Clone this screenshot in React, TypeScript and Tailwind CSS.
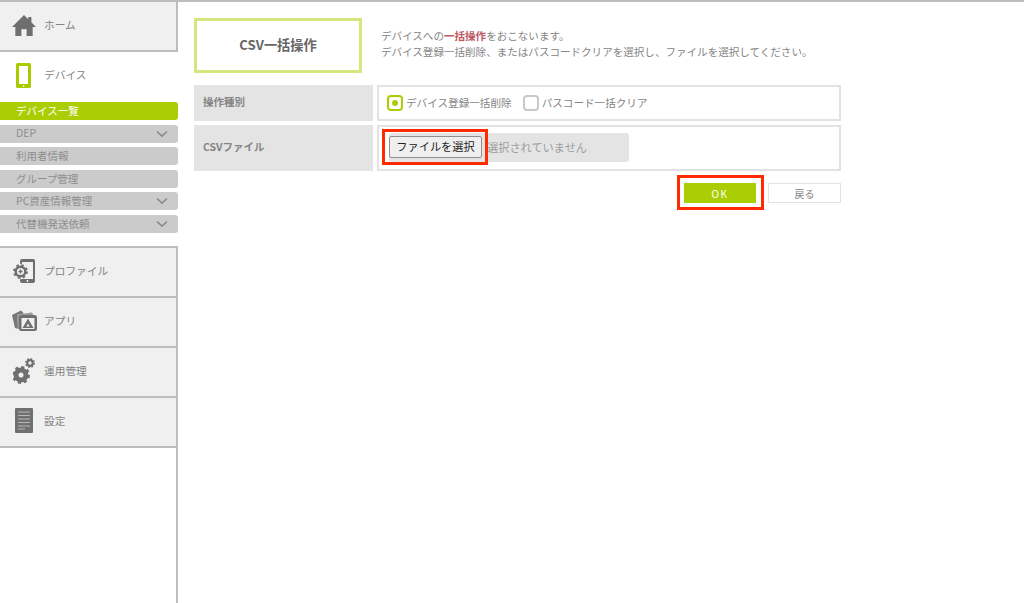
import React from 'react';

const font = { fontFamily: '"Noto Sans CJK JP", "Liberation Sans", sans-serif' };

function Chevron() {
  return (
    <svg width="12" height="7" viewBox="0 0 12 7" className="absolute right-[10px] top-1/2 -translate-y-1/2">
      <path d="M1 1l5 4.6L11 1" fill="none" stroke="#8a8a8a" strokeWidth="1.6" />
    </svg>
  );
}

function HomeIcon() {
  return (
    <svg width="24" height="21" viewBox="0 0 26 22" preserveAspectRatio="none">
      <path d="M13 0L0 12.5h3.6V22h6.6v-7h5.6v7h6.6v-9.5H26L21 7.7V2h-3.4v2.4z" fill="#6f6f6f" />
    </svg>
  );
}

function PhoneIcon() {
  return (
    <svg width="15" height="25" viewBox="0 0 15 25">
      <rect x="0" y="0" width="15" height="25" rx="1.5" fill="#a9cc00" />
      <rect x="3" y="3" width="9" height="18" fill="#fff" />
      <circle cx="7.5" cy="23" r="0.8" fill="#fff" />
    </svg>
  );
}

function ProfileIcon() {
  return (
    <svg width="22" height="24" viewBox="0 0 22 24">
      <rect x="7" y="0" width="15" height="24" rx="2" fill="#6f6f6f" />
      <rect x="9" y="3" width="11" height="17" fill="#f0f0f0" />
      <circle cx="14.500" cy="22" r="0.9" fill="#fff" />
      <circle cx="7.500" cy="12.500" r="7.800" fill="#f0f0f0" />
      <circle cx="7.500" cy="12.500" r="4.800" fill="none" stroke="#6f6f6f" strokeWidth="2.400" />
      <circle cx="7.500" cy="12.500" r="6.400" fill="none" stroke="#6f6f6f" strokeWidth="2" strokeDasharray="2.500 2.530" />
      <path d="M5.500 12.500h4M7.500 10.500v4" stroke="#6f6f6f" strokeWidth="1.300" />
    </svg>
  );
}

function AppIcon() {
  return (
    <svg width="25" height="21" viewBox="0 0 25 21">
      <path d="M0 5L9 0.500l3 3L5 5l1.500 14L3 18z" fill="#777" />
      <path d="M5 4.500L20 2.500l1.500 3H8L7 19l-1.500-1z" fill="#999" />
      <rect x="7" y="5" width="18" height="16" rx="2.500" fill="#6f6f6f" />
      <rect x="9.500" y="8" width="13" height="11" fill="#f0f0f0" />
      <path d="M16 8.500l5.500 9.500h-11z" fill="#6f6f6f" />
      <path d="M16 13.500l1.700 3h-3.400z" fill="#f0f0f0" />
    </svg>
  );
}

function GearsIcon() {
  return (
    <svg width="22" height="26" viewBox="0 0 22 26">
      <circle cx="8" cy="17" r="5" fill="none" stroke="#6f6f6f" strokeWidth="5" />
      <circle cx="8" cy="17" r="7.800" fill="none" stroke="#6f6f6f" strokeWidth="2.400" strokeDasharray="3.060 3.060" />
      <circle cx="17" cy="5" r="2.800" fill="none" stroke="#6f6f6f" strokeWidth="2.200" />
      <circle cx="17" cy="5" r="4.300" fill="none" stroke="#6f6f6f" strokeWidth="1.400" strokeDasharray="1.690 1.690" />
    </svg>
  );
}

function SettingsIcon() {
  return (
    <svg width="18" height="25" viewBox="0 0 18 25">
      <rect width="18" height="25" rx="1" fill="#6f6f6f" />
      <path d="M3 4h12M3 7.500h12M3 11h12M3 14.500h12M3 18h12M3 21h7" stroke="#b8b8b8" strokeWidth="1" />
    </svg>
  );
}

function NavTile({ icon, label }: { icon: React.ReactNode; label: string }) {
  return (
    <div className="flex items-center h-[50px] pb-[2px] bg-[#f0f0f0] border-b-2 border-r-2 border-[#bdbdbd]">
      <div className="w-[44px] flex justify-center pl-[4px]">{icon}</div>
      <span className="text-[10.700px] text-[#848484]">{label}</span>
    </div>
  );
}

function SubItem({ label, active, arrow }: { label: string; active?: boolean; arrow?: boolean }) {
  return (
    <div
      className={`relative h-[18px] flex items-center pl-[16px] rounded-r-[3px] text-[10.500px] leading-none ${
        active ? 'bg-[#abcd03] text-white' : 'bg-[#cbcbcb] text-[#8e8e8e]'
      }`}
    >
      {label}
      {arrow && <Chevron />}
    </div>
  );
}

export default function App() {
  return (
    <div style={font} className="flex h-[603px] w-[1024px] bg-white border-t-2 border-[#bdbdbd] overflow-hidden">
      <aside className="w-[178px] shrink-0 flex flex-col">
        <NavTile icon={<HomeIcon />} label="ホーム" />
        <div className="h-[50px] pb-[4px] flex items-center">
          <div className="w-[44px] flex justify-center pl-[3px]">
            <PhoneIcon />
          </div>
          <span className="text-[10.700px] text-[#848484]">デバイス</span>
        </div>
        <div className="flex flex-col gap-[4.600px]">
          <SubItem label="デバイス一覧" active />
          <SubItem label="DEP" arrow />
          <SubItem label="利用者情報" />
          <SubItem label="グループ管理" />
          <SubItem label="PC資産情報管理" arrow />
          <SubItem label="代替機発送依頼" arrow />
        </div>
        <div className="mt-[13px] flex-1 border-t-2 border-r-2 border-[#bdbdbd]">
          <div className="-mr-[2px]">
            <NavTile icon={<ProfileIcon />} label="プロファイル" />
            <NavTile icon={<AppIcon />} label="アプリ" />
            <NavTile icon={<GearsIcon />} label="運用管理" />
            <NavTile icon={<SettingsIcon />} label="設定" />
          </div>
        </div>
      </aside>

      <main className="w-[647px] ml-[16px] pt-[16px]">
        <div className="flex items-center h-[55px]">
          <div className="w-[168px] h-[55px] pb-[2px] border-[3px] border-[#d6e67f] flex items-center justify-center text-[13.200px] font-bold text-[#666]">
            CSV一括操作
          </div>
          <div className="ml-[19px] pb-[4px] text-[10.550px] leading-[16px] text-[#848484]">
            <p>
              デバイスへの<span className="text-[#bb5a62] font-bold">一括操作</span>をおこないます。
            </p>
            <p>デバイス登録一括削除、またはパスコードクリアを選択し、ファイルを選択してください。</p>
          </div>
        </div>

        <div className="mt-[12px] flex gap-[4px] h-[36px]">
          <div className="w-[179px] bg-[#e4e4e4] flex items-center pl-[9px] pb-[2px] text-[10.500px] font-bold text-[#848484]">操作種別</div>
          <div className="flex-1 border-2 border-[#e2e2e2] flex items-center pl-[8px] pb-[1px] text-[10.600px] text-[#848484]">
            <span className="w-[16px] h-[16px] rounded-[4px] border-2 border-[#abcd03] flex items-center justify-center">
              <span className="w-[6px] h-[6px] rounded-full bg-[#abcd03]" />
            </span>
            <span className="ml-[3px]">デバイス登録一括削除</span>
            <span className="ml-[11px] w-[16px] h-[16px] rounded-[4px] border-2 border-[#c8c8c8]" />
            <span className="ml-[3px]">パスコード一括クリア</span>
          </div>
        </div>

        <div className="mt-[4px] flex gap-[4px] h-[46px]">
          <div className="w-[179px] bg-[#e4e4e4] flex items-center pl-[9px] pb-[3px] text-[10.500px] font-bold text-[#848484]">CSVファイル</div>
          <div className="relative flex-1 border-2 border-[#e2e2e2] flex items-center pl-[10px] pb-[2px]">
            <div className="relative w-[240px] h-[29px] bg-[#e4e4e4] rounded-[3px] flex items-center">
              <button className="w-[93px] h-[22px] bg-[#efefef] border border-[#8f8f8f] rounded-[2px] text-[11.200px] leading-none text-[#222] shrink-0">
                ファイルを選択
              </button>
              <span className="ml-[5px] text-[11.200px] text-[#9c9c9c] whitespace-nowrap">選択されていません</span>
            </div>
            <div className="absolute left-[3px] top-[2px] w-[106px] h-[36px] border-[3px] border-[#ff2a00]" />
          </div>
        </div>

        <div className="mt-[12px] flex justify-end gap-[12px]">
          <div className="relative w-[72px] h-[20px] bg-[#abcd03] flex items-center justify-center text-[10px] tracking-[1.500px] text-white">
            OK
            <div className="absolute -left-[7px] -top-[8px] w-[87px] h-[35px] border-[3px] border-[#ff2a00]" />
          </div>
          <div className="w-[73px] h-[20px] border border-[#e2e2e2] flex items-center justify-center text-[10px] text-[#848484]">
            戻る
          </div>
        </div>
      </main>
    </div>
  );
}
